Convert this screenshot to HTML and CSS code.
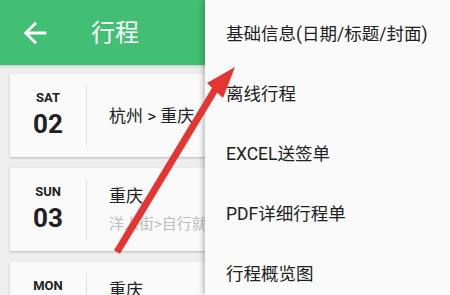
FILE: index.html
```html
<!DOCTYPE html>
<html lang="zh-CN">
<head>
<meta charset="utf-8">
<link rel="stylesheet" href="styles.css">
</head>
<body>
<div class="app">
  <header class="topbar">
    <svg class="back" viewBox="0 0 24 24" width="34" height="34"><path fill="#fff" d="M20 11H7.83l5.59-5.59L12 4l-8 8 8 8 1.41-1.41L7.83 13H20v-2z"/></svg>
    <h1 class="title">行程</h1>
  </header>
  <main class="list">
    <div class="card">
      <div class="date"><span class="dow">SAT</span><span class="day">02</span></div>
      <div class="divider"></div>
      <div class="info"><div class="place">杭州 &gt; 重庆</div></div>
    </div>
    <div class="card">
      <div class="date"><span class="dow">SUN</span><span class="day">03</span></div>
      <div class="divider"></div>
      <div class="info"><div class="place">重庆</div><div class="sub">洋人街&gt;自行就餐</div></div>
    </div>
    <div class="card">
      <div class="date"><span class="dow">MON</span><span class="day">04</span></div>
      <div class="divider"></div>
      <div class="info"><div class="place">重庆</div><div class="sub">解放碑</div></div>
    </div>
  </main>
  <nav class="menu">
    <div class="item">基础信息(日期/标题/封面)</div>
    <div class="item">离线行程</div>
    <div class="item">EXCEL送签单</div>
    <div class="item">PDF详细行程单</div>
    <div class="item">行程概览图</div>
  </nav>
  <svg class="pointer" viewBox="0 0 450 295" width="450" height="295">
    <line x1="216" y1="88" x2="117" y2="252" stroke="#e53532" stroke-width="7"/>
    <polygon points="235,67 207,83 223,98" fill="#e53532"/>
  </svg>
</div>
</body>
</html>
```
FILE: styles.css
```css
* { box-sizing: border-box; }
html, body { margin: 0; padding: 0; }
body {
  width: 450px;
  height: 295px;
  overflow: hidden;
  background: #eeeeee;
  font-family: Roboto, "Noto Sans CJK SC", sans-serif;
  color: #212121;
}
.app { position: relative; width: 450px; height: 295px; overflow: hidden; }
.topbar {
  height: 65px;
  background: #42bf74;
  display: flex;
  align-items: center;
  padding-left: 18px;
  box-shadow: 0 1px 3px rgba(0,0,0,0.2);
}
.back { display: block; }
.title {
  margin: 0 0 0 39px;
  font-size: 24px;
  font-weight: 400;
  color: #fff;
  line-height: 1;
}
.list {
  padding: 9px 10px 0 10px;
  display: flex;
  flex-direction: column;
  gap: 11px;
}
.card {
  background: #fafafa;
  display: flex;
  padding: 11px 0;
  height: 83px;
  box-shadow: 0 1px 2px rgba(0,0,0,0.22);
  flex-shrink: 0;
}
.date {
  width: 76px;
  display: flex;
  flex-direction: column;
  align-items: center;
  justify-content: center;
  padding-bottom: 3px;
}
.dow { font-size: 13px; font-weight: 700; line-height: 16px; color: #212121; }
.day { font-size: 26px; font-weight: 700; line-height: 30px; color: #212121; margin-top: 3px; }
.divider { width: 1px; background: #e0e0e0; }
.info {
  padding-left: 22px;
  display: flex;
  flex-direction: column;
  justify-content: center;
  white-space: nowrap;
}
.place { font-size: 17px; line-height: 24px; color: #212121; }
.sub { font-size: 15px; line-height: 22px; color: #bdbdbd; margin-top: 5px; }
.menu {
  position: absolute;
  left: 205px;
  top: 0;
  width: 245px;
  height: 295px;
  background: #fafafa;
  padding-top: 2px;
  box-shadow: -2px 0 5px rgba(0,0,0,0.25);
}
.item {
  height: 60px;
  display: flex;
  align-items: center;
  padding-left: 21px;
  font-size: 17.5px;
  color: #212121;
  white-space: nowrap;
}
.pointer { position: absolute; left: 0; top: 0; pointer-events: none; }
```
